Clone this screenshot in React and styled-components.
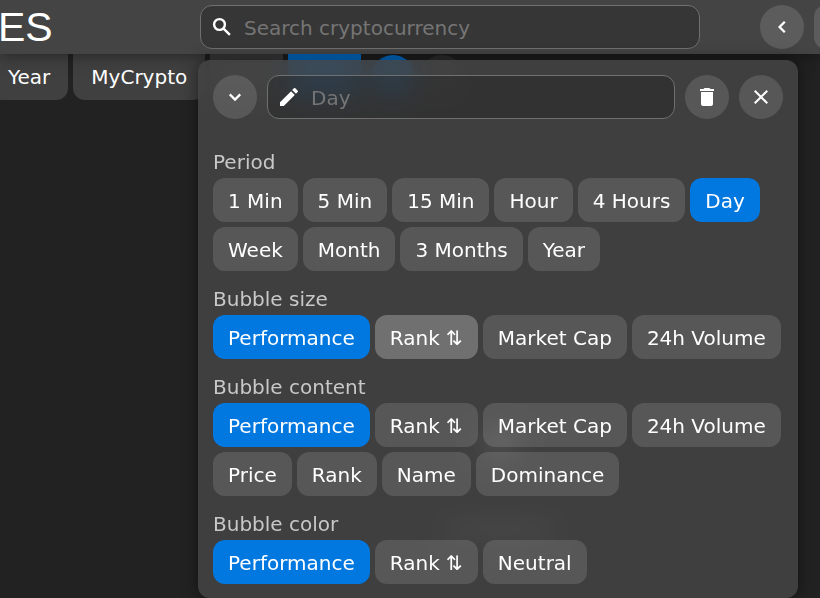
import React, { useState } from "react";
import styled, { createGlobalStyle, css } from "styled-components";
import { MdEdit, MdDelete, MdClose } from "react-icons/md";

const GlobalStyle = createGlobalStyle`
  *, *::before, *::after { box-sizing: border-box; }
  html, body { margin: 0; }
  body {
    background: #222;
    color: #fff;
    font-family: Verdana, "DejaVu Sans", sans-serif;
    font-size: 20px;
    overflow: hidden;
  }
  button, input { font: inherit; color: inherit; }
`;

const Page = styled.div`
  display: flex;
  flex-direction: column;
  min-height: 100vh;
  overflow: hidden;
`;

const Header = styled.header`
  position: relative;
  z-index: 1;
  display: grid;
  grid-template-columns: 200px minmax(0, 500px) 1fr;
  align-items: center;
  height: 54px;
  background: #444;
  box-shadow: 0 0 16px rgba(0, 0, 0, 0.5);
`;

const Logo = styled.span`
  font-family: "Liberation Sans", Arial, sans-serif;
  font-size: 41px;
  line-height: 44px;
  margin-left: -2px;
`;

const HeaderActions = styled.div`
  display: flex;
  gap: 10px;
  justify-content: flex-end;
  margin-right: -38px;
`;

const Field = styled.label`
  display: flex;
  flex: 1;
  align-items: center;
  gap: 10px;
  min-width: 0;
  height: 44px;
  padding: 0 9px;
  border: 1px solid #707070;
  border-radius: 12px;
  background: ${(p) => (p.$clear ? "rgba(0, 0, 0, 0.2)" : "#363636")};

  svg {
    flex: none;
  }
`;

const TextInput = styled.input`
  flex: 1;
  min-width: 0;
  padding: 2px 0 0;
  border: 0;
  outline: 0;
  background: none;

  &::placeholder {
    color: #757575;
    opacity: 1;
  }
`;

const RoundButton = styled.button`
  display: grid;
  place-items: center;
  flex: none;
  width: 44px;
  height: 44px;
  padding: 0;
  border: 0;
  border-radius: ${(p) => (p.$square ? "12px" : "50%")};
  background: ${(p) => p.$tone || "rgba(255, 255, 255, 0.13)"};
  cursor: pointer;
`;

const Workspace = styled.main`
  position: relative;
  flex: 1;
`;

const Tabs = styled.nav`
  display: flex;
  align-items: center;
  gap: 5px;
  margin-left: -10px;
`;

const Tab = styled.button`
  flex: none;
  height: 46px;
  min-width: 73px;
  padding: 0 18px;
  border: 0;
  border-radius: 0 0 12px 12px;
  background: ${(p) => (p.$active ? "#0078e0" : "#404040")};
  cursor: pointer;
`;

const TabActions = styled.div`
  display: flex;
  gap: 5px;
  margin-left: 5px;
`;

const Bubble = styled.div`
  position: absolute;
  left: ${(p) => p.$x}px;
  top: ${(p) => p.$y}px;
  width: ${(p) => p.$w}px;
  height: ${(p) => p.$h}px;
  border-radius: 50%;
  background: #999;
`;

const Panel = styled.section`
  position: absolute;
  top: 6px;
  left: 198px;
  right: 22px;
  z-index: 2;
  padding: 15px 15px 14px;
  border-radius: 12px;
  background: rgba(68, 68, 68, 0.87);
  backdrop-filter: blur(12px);
  box-shadow: 0 0 16px rgba(0, 0, 0, 0.5);
`;

const PanelBar = styled.div`
  display: flex;
  gap: 10px;
  margin-bottom: 15px;
`;

const Group = styled.fieldset`
  min-width: 0;
  margin: 0;
  padding: 16px 0 0;
  border: 0;
`;

const GroupLabel = styled.legend`
  float: left;
  width: 100%;
  padding: 0;
  margin-bottom: 4px;
  line-height: 24px;
  color: #c8c8c8;
`;

const Options = styled.div`
  clear: both;
  display: flex;
  flex-wrap: wrap;
  gap: 5px;
`;

const Option = styled.button`
  height: 44px;
  padding: 2px 15px 0;
  border: 0;
  border-radius: 12px;
  background: rgba(255, 255, 255, 0.13);
  white-space: nowrap;
  cursor: pointer;

  ${(p) =>
    p.$highlighted &&
    css`
      background: rgba(255, 255, 255, 0.26);
    `}

  &[aria-pressed="true"] {
    background: #0078e0;
  }
`;

const groups = [
  {
    label: "Period",
    initial: "Day",
    options: ["1 Min", "5 Min", "15 Min", "Hour", "4 Hours", "Day", "Week", "Month", "3 Months", "Year"],
  },
  {
    label: "Bubble size",
    initial: "Performance",
    highlighted: "Rank ⇅",
    options: ["Performance", "Rank ⇅", "Market Cap", "24h Volume"],
  },
  {
    label: "Bubble content",
    initial: "Performance",
    options: ["Performance", "Rank ⇅", "Market Cap", "24h Volume", "Price", "Rank", "Name", "Dominance"],
  },
  {
    label: "Bubble color",
    initial: "Performance",
    options: ["Performance", "Rank ⇅", "Neutral"],
  },
];

function LineIcon({ d, weight = 2.3, children }) {
  return (
    <svg width="24" height="24" viewBox="0 0 24 24" fill="none" stroke="currentColor" strokeWidth={weight} aria-hidden="true">
      {children}
      <path d={d} />
    </svg>
  );
}

function OptionGroup({ label, initial, highlighted, options }) {
  const [selected, setSelected] = useState(initial);
  return (
    <Group>
      <GroupLabel>{label}</GroupLabel>
      <Options>
        {options.map((name) => (
          <Option
            key={name}
            type="button"
            aria-pressed={selected === name}
            $highlighted={highlighted === name}
            onClick={() => setSelected(name)}
          >
            {name}
          </Option>
        ))}
      </Options>
    </Group>
  );
}

export default function App() {
  return (
    <>
      <GlobalStyle />
      <Page>
        <Header>
          <Logo>ES</Logo>
          <Field>
            <LineIcon d="M13.6 13.6l6.3 6.3" weight={2.4}>
              <circle cx="9.5" cy="9.5" r="5.4" />
            </LineIcon>
            <TextInput type="search" placeholder="Search cryptocurrency" />
          </Field>
          <HeaderActions>
            <RoundButton type="button" aria-label="Previous">
              <LineIcon d="M14.8 6.8L9.6 12l5.2 5.2" />
            </RoundButton>
            <RoundButton type="button" aria-label="Pages" $square />
          </HeaderActions>
        </Header>
        <Workspace>
          <Tabs>
            <Tab type="button">Year</Tab>
            <Tab type="button">MyCrypto</Tab>
            <Tab type="button" aria-label="Custom" />
            <Tab type="button" aria-label="Current" $active />
            <TabActions>
              <RoundButton type="button" aria-label="Edit" $tone="#0078e0" />
              <RoundButton type="button" aria-label="Add" $tone="#333" />
            </TabActions>
          </Tabs>
          <Bubble $x={480} $y={374} $w={40} $h={30} />
          <Bubble $x={440} $y={470} $w={120} $h={10} />
          <Panel aria-label="Configuration">
            <PanelBar>
              <RoundButton type="button" aria-label="Collapse">
                <LineIcon d="M6.8 9.4L12 14.6l5.2-5.2" />
              </RoundButton>
              <Field $clear>
                <MdEdit size={24} />
                <TextInput type="text" placeholder="Day" />
              </Field>
              <RoundButton type="button" aria-label="Delete">
                <MdDelete size={24} />
              </RoundButton>
              <RoundButton type="button" aria-label="Close">
                <MdClose size={24} />
              </RoundButton>
            </PanelBar>
            {groups.map((group) => (
              <OptionGroup key={group.label} {...group} />
            ))}
          </Panel>
        </Workspace>
      </Page>
    </>
  );
}
